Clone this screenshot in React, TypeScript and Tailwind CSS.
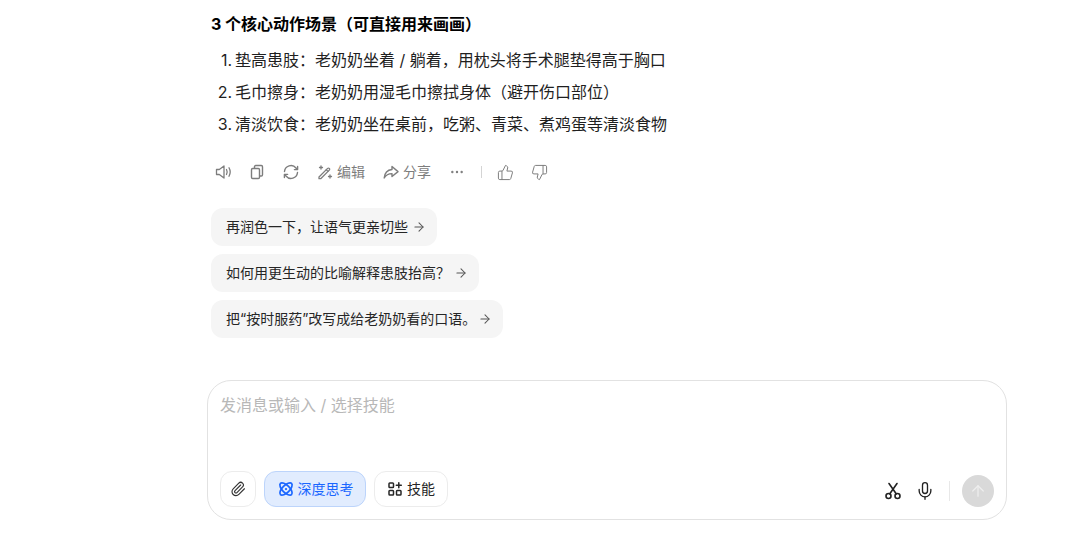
import { ArrowRight, ArrowUp, Ellipsis, Mic, Paperclip, ThumbsDown, ThumbsUp } from "lucide-react";

const font = "font-['Inter','Noto_Sans_CJK_SC',sans-serif]";

const steps = [
  "垫高患肢：老奶奶坐着 / 躺着，用枕头将手术腿垫得高于胸口",
  "毛巾擦身：老奶奶用湿毛巾擦拭身体（避开伤口部位）",
  "清淡饮食：老奶奶坐在桌前，吃粥、青菜、煮鸡蛋等清淡食物",
];

const suggestions = [
  { text: "再润色一下，让语气更亲切些", gap: "ml-[4px]" },
  { text: "如何用更生动的比喻解释患肢抬高？", gap: "ml-[4px]" },
  { text: "把“按时服药”改写成给老奶奶看的口语。", gap: "ml-[2px]" },
];

function VolumeIcon() {
  return (
    <svg width="18" height="18" viewBox="0 0 18 18" fill="none" stroke="currentColor" strokeWidth="1.3" strokeLinejoin="round" strokeLinecap="round">
      <path d="M1.5 6.5v5h2.8L9 15V3L4.3 6.5H1.5Z" />
      <path d="M11.5 6.5c.8 1.5.8 3.5 0 5M14 4.8c1.5 2.6 1.5 5.8 0 8.4" />
    </svg>
  );
}

function CopyIcon() {
  return (
    <svg width="16" height="16" viewBox="0 0 16 16" fill="none" stroke="currentColor" strokeWidth="1.4" strokeLinejoin="round">
      <rect x="2.5" y="4.5" width="8" height="10" rx="1.2" />
      <path d="M5.5 4.5V2.7c0-.6.5-1.2 1.2-1.2h5.6c.7 0 1.2.6 1.2 1.2v8.1c0 .7-.5 1.2-1.2 1.2h-1.8" />
    </svg>
  );
}

function RefreshIcon() {
  return (
    <svg width="18" height="18" viewBox="0 0 18 18" fill="none" stroke="currentColor" strokeWidth="1.4" strokeLinecap="round" strokeLinejoin="round">
      <path d="M2.5 8.5A6.5 6.5 0 0 1 14 5l1 1.3" />
      <path d="M15.5 9.5A6.5 6.5 0 0 1 4 13l-1-1.3" />
      <path d="M15.6 3.4v3.2h-3.2M2.4 14.6v-3.2h3.2" />
    </svg>
  );
}

function EditIcon() {
  return (
    <svg width="16" height="16" viewBox="0 0 16 16" fill="none" stroke="currentColor" strokeWidth="1.3" strokeLinecap="round" strokeLinejoin="round">
      <path d="M2 13 10.6 4.4a1.2 1.2 0 0 1 1.7 0 1.2 1.2 0 0 1 0 1.7L3.7 14.7H2V13Z" />
      <path d="M9.3 5.7 11 7.4M4 2v3M2.5 3.5h3M13 11v3M11.5 12.5h3" />
    </svg>
  );
}

function ShareIcon() {
  return (
    <svg width="16" height="16" viewBox="0 0 16 16" fill="none" stroke="currentColor" strokeWidth="1.4" strokeLinejoin="round">
      <path d="M9 2.5 15 7.6 9 12.5V9.6C5.5 9.6 3 10.8 1.2 14 1.6 9.6 4 6 9 5.5V2.5Z" />
    </svg>
  );
}

function OrbitIcon() {
  return (
    <svg width="18" height="18" viewBox="0 0 16 16" fill="none" stroke="currentColor" strokeWidth="1.5">
      <ellipse cx="8" cy="8" rx="3.2" ry="7" transform="rotate(45 8 8)" />
      <ellipse cx="8" cy="8" rx="3.2" ry="7" transform="rotate(-45 8 8)" />
      <circle cx="8" cy="8" r="1" fill="currentColor" stroke="none" />
    </svg>
  );
}

function SkillIcon() {
  return (
    <svg width="16" height="16" viewBox="0 0 16 16" fill="none" stroke="currentColor" strokeWidth="1.5" strokeLinecap="round">
      <rect x="2" y="2" width="4.5" height="4.5" rx="0.8" />
      <rect x="2" y="9.5" width="4.5" height="4.5" rx="0.8" />
      <rect x="9.5" y="9.5" width="4.5" height="4.5" rx="0.8" />
      <path d="M11.8 1.8v5M9.3 4.3h5" />
    </svg>
  );
}

function ScissorsIcon() {
  return (
    <svg width="18" height="18" viewBox="0 0 18 18" fill="none" stroke="currentColor" strokeWidth="1.6" strokeLinecap="round">
      <circle cx="4.5" cy="14" r="2.5" />
      <circle cx="13.5" cy="14" r="2.5" />
      <path d="M5.8 11.8 13 1.5M12.2 11.8 5 1.5" />
    </svg>
  );
}

export default function App() {
  return (
    <div className={`${font} h-[533px] w-[1092px] overflow-hidden bg-white text-[#1f1f1f]`}>
      <div className="ml-[207px] flex w-[800px] flex-col">
        <div className="px-1">
          <h3 className="mt-[12px] text-[16px] leading-[24px] font-bold text-black">3 个核心动作场景（可直接用来画画）</h3>
          <ol className="mt-[8px] flex flex-col text-[16px] leading-[32px]">
            {steps.map((s, i) => (
              <li key={s} className="flex">
                <span className="w-[24px] pr-[3px] text-right">{i + 1}.</span>
                <span>{s}</span>
              </li>
            ))}
          </ol>

          <div className="mt-[16px] flex h-[32px] items-center text-[14px] text-[#7d7d7d]">
            <span className="ml-[4px]"><VolumeIcon /></span>
            <span className="ml-[16px]"><CopyIcon /></span>
            <span className="ml-[17px]"><RefreshIcon /></span>
            <span className="ml-[17px] flex items-center gap-[4px]"><EditIcon /><span className="-translate-y-px">编辑</span></span>
            <span className="ml-[18px] flex items-center gap-[4px]"><ShareIcon /><span className="-translate-y-px">分享</span></span>
            <span className="ml-[18px]"><Ellipsis size={16} strokeWidth={1.6} /></span>
            <span className="ml-[16px] h-[12px] w-px bg-[#d4d4d4]" />
            <span className="ml-[15px]"><ThumbsUp size={17} strokeWidth={1.4} /></span>
            <span className="ml-[17px]"><ThumbsDown size={17} strokeWidth={1.4} /></span>
          </div>

          <div className="mt-[20px] flex flex-col items-start gap-[8px]">
            {suggestions.map((s) => (
              <div key={s.text} className="flex h-[38px] items-center rounded-[12px] bg-[#f5f5f5] pr-[11px] pl-[15px] text-[14px] leading-[20px] text-[#262626]">
                <span>{s.text}</span>
                <ArrowRight size={14} strokeWidth={1.8} className={`${s.gap} text-[#555]`} />
              </div>
            ))}
          </div>
        </div>

        <div className="mt-[42px] flex h-[140px] flex-col justify-between rounded-[24px] border border-[#e2e2e2] bg-white pt-[12px] pr-[12px] pb-[12px] pl-[12px]">
          <div className="text-[16px] leading-[24px] text-[#b8b8b8]">发消息或输入 / 选择技能</div>
          <div className="flex items-end">
            <div className="flex h-[36px] w-[36px] items-center justify-center rounded-[12px] border border-[#ececec] text-[#333]">
              <Paperclip size={16} strokeWidth={1.7} />
            </div>
            <div className="ml-[8px] flex h-[36px] w-[102px] items-center justify-center gap-[3px] rounded-[12px] border border-[#bcd4fb] bg-[#e1ecfe] text-[14px] text-[#1a66ff]">
              <OrbitIcon />
              <span className="-translate-y-px">深度思考</span>
            </div>
            <div className="ml-[8px] flex h-[36px] w-[74px] items-center justify-center gap-[4px] rounded-[12px] border border-[#ececec] text-[14px] text-[#262626]">
              <SkillIcon />
              <span className="-translate-y-px">技能</span>
            </div>
            <div className="ml-auto flex items-center text-[#222]">
              <ScissorsIcon />
              <Mic size={20} strokeWidth={1.6} className="ml-[13px]" />
              <span className="ml-[14px] h-[20px] w-px bg-[#e8e8e8]" />
              <span className="ml-[12px] flex h-[32px] w-[32px] items-center justify-center rounded-full bg-[#d9d9d9] text-[#eeeeee]">
                <ArrowUp size={18} strokeWidth={1.6} />
              </span>
            </div>
          </div>
        </div>
      </div>
    </div>
  );
}
